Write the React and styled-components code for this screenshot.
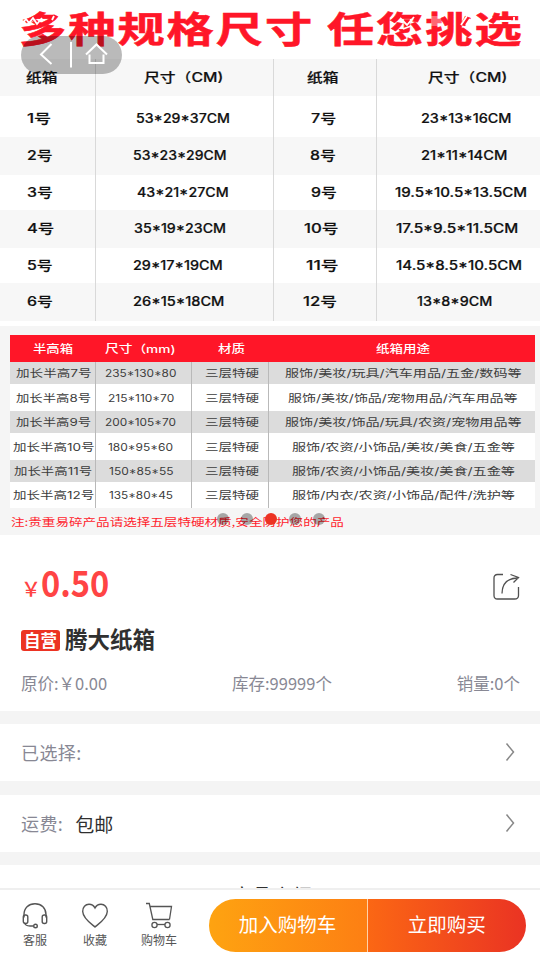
import React, { useLayoutEffect, useRef } from "react";
import styled, { createGlobalStyle } from "styled-components";

const GlobalStyle = createGlobalStyle`
  body {
    margin: 0;
    background: #fff;
    font-family: "Noto Sans CJK SC", sans-serif;
  }
  * {
    box-sizing: border-box;
  }
`;

const Page = styled.div`
  position: relative;
  width: 540px;
  height: 960px;
  overflow: hidden;
  display: flex;
  flex-direction: column;
  background: #fff;
`;

const Banner = styled.div`
  position: relative;
  flex: none;
  height: 535px;
  background: #f5f5f5;
`;

const BannerTitle = styled.div`
  height: 58.5px;
  padding-left: 19px;
  background: #fff;
  color: #ff1628;
  font-size: 36.5px;
  font-weight: 700;
  letter-spacing: 1.5px;
  line-height: 55px;
  -webkit-text-stroke: 0.5px #ff1628;
`;

const FitBox = styled.div`
  width: ${(p) => p.$width}px;
  flex: none;
  white-space: nowrap;
  span {
    display: inline-block;
    transform-origin: left center;
  }
`;

const SizeTable = styled.div`
  display: grid;
  grid-template-rows: 37.5px 41px 38px 35px 38px 35px 38px;
  height: 267.5px;
  padding-bottom: 5px;
  background: #fff;
`;

const SizeRow = styled.div`
  display: grid;
  grid-template-columns: 95.5px 178px 103px 1fr;
  background: ${(p) => (p.$shaded ? "#f7f7f7" : "#fff")};
`;

const SizeCell = styled.div`
  display: flex;
  align-items: center;
  padding-left: ${(p) => p.$indent}px;
  padding-top: ${(p) => p.$drop || 0.6}px;
  border-right: 1px solid #d9d9d9;
  color: #111;
  font-family: "Inter", "Noto Sans CJK SC", sans-serif;
  font-size: 12.8px;
  font-weight: 500;
  line-height: 16px;
  -webkit-text-stroke: 0.2px #111;
  &:last-child {
    border-right: none;
  }
`;

const UsageTable = styled.div`
  display: grid;
  grid-template-rows: 26.5px 22.5px 27px 22px 27px 22px 26px;
  margin: 9px 5px 0 9.5px;
`;

const UsageRow = styled.div`
  display: grid;
  grid-template-columns: 86.5px 96px 77px 1fr;
  background: ${(p) => (p.$head ? "#ff1628" : p.$shaded ? "#dcdcdc" : "#fff")};
`;

const UsageCell = styled.div`
  display: flex;
  align-items: center;
  padding-left: ${(p) => p.$indent}px;
  padding-top: 2px;
  border-right: 1px solid ${(p) => (p.$head ? "transparent" : "#b9b9b9")};
  color: ${(p) => (p.$head ? "#fff" : "#3c3c3c")};
  font-family: "Inter", "Noto Sans CJK SC", sans-serif;
  font-size: ${(p) => (p.$head ? 11 : 10.5)}px;
  font-weight: ${(p) => (p.$head ? 500 : 400)};
  line-height: 16px;
  &:last-child {
    border-right: none;
  }
`;

const Warning = styled.div`
  padding: 5.5px 0 0 11px;
  color: #ff1d2d;
  font-size: 10.5px;
  line-height: 16px;
`;

const StatusIcons = styled.svg`
  position: absolute;
  top: 0;
  left: 0;
`;

const NavPill = styled.div`
  position: absolute;
  left: 21px;
  top: 36px;
  width: 100.5px;
  height: 37.5px;
  border-radius: 19px;
  background: rgba(0, 0, 0, 0.27);
`;

const Dots = styled.div`
  position: absolute;
  left: 217px;
  top: 513px;
  display: flex;
  gap: 12px;
`;

const Dot = styled.i`
  width: 12px;
  height: 12px;
  border-radius: 50%;
  background: ${(p) => (p.$active ? "#ec3323" : "rgba(0, 0, 0, 0.32)")};
`;

const Product = styled.div`
  flex: none;
  height: 176px;
  padding: 24px 20px 0 21px;
`;

const PriceRow = styled.div`
  display: flex;
  justify-content: space-between;
  align-items: center;
  height: 52px;
  svg {
    margin-top: 3px;
  }
`;

const Price = styled.div`
  display: flex;
  align-items: baseline;
  color: #ff4444;
  font-size: 36px;
  font-weight: 700;
  line-height: 50px;
  small {
    width: 19.5px;
    font-size: 20px;
    font-weight: 500;
  }
`;

const NameRow = styled.div`
  display: flex;
  align-items: center;
  gap: 5px;
  height: 32px;
  margin-top: 11px;
  color: #303030;
  font-size: 22.5px;
  font-weight: 700;
`;

const Badge = styled.span`
  width: 39px;
  height: 21px;
  margin-top: 4px;
  border-radius: 3px;
  background: #ec3323;
  color: #fff;
  font-size: 16.5px;
  line-height: 21px;
  text-align: center;
`;

const Meta = styled.div`
  display: flex;
  justify-content: space-between;
  margin-top: 16px;
  color: #888894;
  font-size: 16.5px;
  line-height: 26px;
`;

const Option = styled.div`
  flex: none;
  display: flex;
  align-items: center;
  height: ${(p) => p.$height}px;
  padding: 0 24px 1px 21px;
  border-top: ${(p) => p.$band}px solid #f4f4f4;
  color: #888894;
  font-size: 18px;
  letter-spacing: 0.4px;
  svg {
    margin: 0 0 1px auto;
  }
`;

const OptionValue = styled.span`
  margin-left: 12px;
  color: #303030;
  font-size: 19px;
  letter-spacing: 0;
`;

const Intro = styled.div`
  flex: none;
  height: 36px;
  padding: 16px 0 0 4px;
  border-top: 13.5px solid #f4f4f4;
  color: #303030;
  font-size: 20px;
  line-height: 30px;
  text-align: center;
`;

const Footer = styled.div`
  position: relative;
  flex: none;
  display: flex;
  height: 72px;
  padding: 8.5px 14px 0 5px;
  border-top: 2px solid #efefef;
  background: #fff;
`;

const Tab = styled.div`
  display: flex;
  flex-direction: column;
  align-items: center;
  width: ${(p) => p.$width}px;
  padding-top: 3px;
  color: #555;
  font-size: 12px;
  line-height: 18px;
  svg {
    margin-bottom: 2px;
  }
`;

const Actions = styled.div`
  display: flex;
  margin-left: auto;
  width: 317.5px;
  height: 53.5px;
  border-radius: 27px;
  overflow: hidden;
`;

const Action = styled.div`
  flex: 1;
  background: ${(p) =>
    p.$primary ? "linear-gradient(90deg, #fb6714, #ea3323)" : "linear-gradient(90deg, #fea311, #fd7f13)"};
  border-left: ${(p) => (p.$primary ? "1px solid #ffd3a8" : "none")};
  color: #fff;
  font-size: 19.5px;
  line-height: 50px;
  text-align: center;
`;

// Stretches a line of text to the given width
const Fit = ({ width, children }) => {
  const ref = useRef(null);

  useLayoutEffect(() => {
    ref.current.style.transform = `scaleX(${width / ref.current.offsetWidth})`;
  }, [width, children]);

  return (
    <FitBox $width={width}>
      <span ref={ref}>{children}</span>
    </FitBox>
  );
};

// [text, indent, width] for every cell
const sizes = [
  [["纸箱", 26, 32], ["尺寸（CM)", 48, 79], ["纸箱", 33, 32], ["尺寸（CM)", 51, 79]],
  [["1号", 27, 24], ["53*29*37CM", 40, 94], ["7号", 37, 25], ["23*13*16CM", 44, 90]],
  [["2号", 27, 26], ["53*23*29CM", 37.5, 94], ["8号", 36, 26], ["21*11*14CM", 44, 86]],
  [["3号", 27, 26], ["43*21*27CM", 41.5, 92], ["9号", 37, 26], ["19.5*10.5*13.5CM", 18, 132]],
  [["4号", 27, 27], ["35*19*23CM", 38, 92], ["10号", 30, 34], ["17.5*9.5*11.5CM", 19, 122]],
  [["5号", 27, 26], ["29*17*19CM", 37.5, 90], ["11号", 32, 32], ["14.5*8.5*10.5CM", 19, 126]],
  [["6号", 27, 26], ["26*15*18CM", 37.5, 91], ["12号", 29.5, 34], ["13*8*9CM", 40, 75]],
];

const usages = [
  [["半高箱", 23, 40], ["尺寸（mm)", 9, 71], ["材质", 26, 27], ["纸箱用途", 107, 54]],
  [["加长半高7号", 6, 75], ["235*130*80", 9, 71], ["三层特硬", 13, 54], ["服饰/美妆/玩具/汽车用品/五金/数码等", 16, 236]],
  [["加长半高8号", 6, 75], ["215*110*70", 12, 66], ["三层特硬", 13, 54], ["服饰/美妆/饰品/宠物用品/汽车用品等", 19, 230]],
  [["加长半高9号", 6, 75], ["200*105*70", 9, 71], ["三层特硬", 13, 54], ["服饰/美妆/饰品/玩具/农资/宠物用品等", 16, 236]],
  [["加长半高10号", 3, 81], ["180*95*60", 12, 65], ["三层特硬", 13, 54], ["服饰/农资/小饰品/美妆/美食/五金等", 23, 223]],
  [["加长半高11号", 4, 78], ["150*85*55", 12.5, 64], ["三层特硬", 13, 54], ["服饰/农资/小饰品/美妆/美食/五金等", 23, 223]],
  [["加长半高12号", 3, 81], ["135*80*45", 12.5, 64], ["三层特硬", 13, 54], ["服饰/内衣/农资/小饰品/配件/洗护等", 23, 223]],
];

const Chevron = () => (
  <svg width="12" height="20" viewBox="0 0 12 20" fill="none" stroke="#888" strokeWidth="1.5">
    <path d="M2.5 1.5L9.5 10L2.5 18.5" />
  </svg>
);

const ShareIcon = () => (
  <svg width="28" height="28" viewBox="0 0 28 28" fill="none" stroke="#505050" strokeWidth="1.3">
    <path d="M11 1.5H5.5Q2 1.5 2 5V22.5Q2 26 5.5 26H22.5Q26.5 26 26.5 22.5V14" />
    <path d="M10 20.5C10 11 15 5 26.5 5M18.5 1.5L26.5 4.5L21.5 9.5" />
  </svg>
);

const HeadsetIcon = () => (
  <svg width="26" height="27" viewBox="0 0 26 27" fill="none" stroke="#555" strokeWidth="1.4">
    <path d="M2 15.5V12.5C2 6 6.5 1.7 13 1.7S24 6 24 12.5V15.5" />
    <rect x="1.3" y="13" width="4.5" height="8.5" rx="2" />
    <rect x="20.2" y="13" width="4.5" height="8.5" rx="2" />
    <path d="M2.5 20.5C3 23.5 5 24 8 24H11.5" />
    <circle cx="13.5" cy="24" r="1.8" />
  </svg>
);

const HeartIcon = () => (
  <svg width="28" height="27" viewBox="0 0 28 27" fill="none" stroke="#555" strokeWidth="1.4">
    <path d="M14 25C12 23 2 17 1.7 9.5C1.5 5 4.5 2.2 8 2.2C11 2.2 13 4 14 6C15 4 17 2.2 20 2.2C23.5 2.2 26.5 5 26.3 9.5C26 17 16 23 14 25Z" />
  </svg>
);

const CartIcon = () => (
  <svg width="28" height="27" viewBox="0 0 28 27" fill="none" stroke="#555" strokeWidth="1.3">
    <path d="M1 1.5H4.3L7.8 17.5H24.5M5 4.5H26.5L24.5 17.5" />
    <circle cx="9.5" cy="23" r="2.6" />
    <circle cx="22.5" cy="23" r="2.6" />
    <path d="M12 22.5H20" />
  </svg>
);

const App = () => {
  return (
    <Page>
      <GlobalStyle />
      <Banner>
        <BannerTitle>
          <Fit width={505}>多种规格尺寸 任您挑选</Fit>
        </BannerTitle>
        <SizeTable>
          {sizes.map((row, i) => (
            <SizeRow key={i} $shaded={i % 2 === 0}>
              {row.map(([text, indent, width], j) => (
                <SizeCell key={j} $indent={indent} $drop={i === 1 ? 4.6 : 0}>
                  <Fit width={width}>{text}</Fit>
                </SizeCell>
              ))}
            </SizeRow>
          ))}
        </SizeTable>
        <UsageTable>
          {usages.map((row, i) => (
            <UsageRow key={i} $head={i === 0} $shaded={i % 2 === 1}>
              {row.map(([text, indent, width], j) => (
                <UsageCell key={j} $indent={indent} $head={i === 0}>
                  <Fit width={width}>{text}</Fit>
                </UsageCell>
              ))}
            </UsageRow>
          ))}
        </UsageTable>
        <Warning>
          <Fit width={333}>注:贵重易碎产品请选择五层特硬材质,安全防护您的产品</Fit>
        </Warning>
        <StatusIcons width="540" height="40" viewBox="0 0 540 40" fill="none" stroke="#fff" strokeWidth="1.8">
          <path d="M22 24L26 19L29 23L33 18L37 24L42 18M52 20L54 16M59 24L62 16" />
          <path d="M400 18L407 25L414 17M403 29L411 26" />
          <path d="M431 16H441V26H431Z" fill="#fff" stroke="none" opacity="0.35" />
          <path d="M461 25L467 16M466 25L470 19M484 22L492 17M500 21H511M514 17V24" />
        </StatusIcons>
        <NavPill>
          <svg width="100" height="37" viewBox="0 0 100 37" fill="none" stroke="#fff" strokeWidth="2">
            <path d="M30.5 8L20 18.5L30.5 28M50 6V31.5" />
            <path d="M65 18.5L75.5 8.5L86 18.5M68.5 18.5V27H82.5V18.5" />
          </svg>
        </NavPill>
        <Dots>
          {[0, 1, 2, 3, 4].map((n) => (
            <Dot key={n} $active={n === 2} />
          ))}
        </Dots>
      </Banner>
      <Product>
        <PriceRow>
          <Price>
            <small>￥</small>
            <Fit width={68}>0.50</Fit>
          </Price>
          <ShareIcon />
        </PriceRow>
        <NameRow>
          <Badge>自营</Badge>
          腾大纸箱
        </NameRow>
        <Meta>
          <span>原价:￥0.00</span>
          <span>库存:99999个</span>
          <span>销量:0个</span>
        </Meta>
      </Product>
      <Option $height={70} $band={13}>
        已选择:
        <Chevron />
      </Option>
      <Option $height={71} $band={14}>
        运费:
        <OptionValue>包邮</OptionValue>
        <Chevron />
      </Option>
      <Intro>商品介绍</Intro>
      <Footer>
        <Tab $width={60}>
          <HeadsetIcon />
          客服
        </Tab>
        <Tab $width={60}>
          <HeartIcon />
          收藏
        </Tab>
        <Tab $width={68}>
          <CartIcon />
          购物车
        </Tab>
        <Actions>
          <Action>加入购物车</Action>
          <Action $primary>立即购买</Action>
        </Actions>
      </Footer>
    </Page>
  );
};

export default App;
